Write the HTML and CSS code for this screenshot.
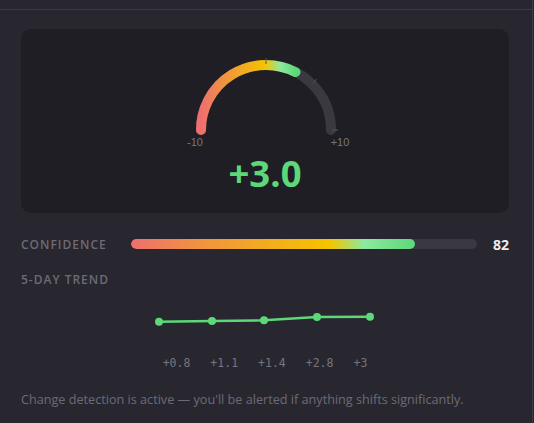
FILE: index.html
```html
<!DOCTYPE html>
<html lang="en">

<head>
  <meta charset="UTF-8" />
  <meta name="viewport" content="width=device-width, initial-scale=1.0" />
  <title>Sentiment Gauge</title>
  <link rel="stylesheet" href="styles.css">
</head>

<body>
  <div class="page">
    <div class="topbar"></div>

    <div class="content">
      <div class="gauge-card">
        <svg class="gauge" width="180" height="92" viewBox="-1 0 180 92">
          <defs>
            <linearGradient id="heat" x1="0" y1="0" x2="1" y2="0">
              <stop offset="0" stop-color="#ee6f6f" />
              <stop offset="0.25" stop-color="#f0943f" />
              <stop offset="0.68" stop-color="#f5c400" />
              <stop offset="0.84" stop-color="#8ee9a0" />
              <stop offset="1" stop-color="#5dd879" />
            </linearGradient>
          </defs>
          <!-- track -->
          <path d="M25 75 A65 65 0 0 1 90 10 A65 65 0 0 1 155 75" fill="none" stroke="#3a3941" stroke-width="10" stroke-linecap="round" />
          <!-- value arc: +3.0 of -10..+10 -->
          <path d="M25 75 A65 65 0 0 1 119.5 17.1" fill="none" stroke="url(#heat)" stroke-width="10" stroke-linecap="round" />
          <g class="ticks" stroke="#55545c" stroke-width="1">
            <line x1="90" y1="9" x2="90" y2="3" />
            <line x1="136.7" y1="28.3" x2="140.9" y2="24.1" />
            <line x1="156" y1="75" x2="162" y2="75" />
          </g>
          <text class="gauge-min" x="19" y="91" text-anchor="middle">-10</text>
          <text class="gauge-max" x="164" y="91" text-anchor="middle">+10</text>
        </svg>
        <div class="gauge-value">+3.0</div>
      </div>

      <div class="metric-row">
        <div class="label">Confidence</div>
        <div class="bar">
          <div class="bar-fill" style="width: 82%"></div>
        </div>
        <div class="metric-value">82</div>
      </div>

      <div class="label trend-label">5-Day Trend</div>

      <div class="trend">
        <svg class="trend-chart" width="222" height="18" viewBox="0 0 222 18">
          <polyline points="5,11.7 58,11 110,10.3 163,7 216,6.7" fill="none" stroke="#5dd879" stroke-width="2.5" stroke-linejoin="round" />
          <g fill="#5dd879">
            <circle cx="5" cy="11.7" r="4" />
            <circle cx="58" cy="11" r="4" />
            <circle cx="110" cy="10.3" r="4" />
            <circle cx="163" cy="7" r="4" />
            <circle cx="216" cy="6.7" r="4" />
          </g>
        </svg>
        <div class="trend-values">
          <span>+0.8</span>
          <span>+1.1</span>
          <span>+1.4</span>
          <span>+2.8</span>
          <span>+3</span>
        </div>
      </div>

      <p class="note">Change detection is active — you'll be alerted if anything shifts significantly.</p>
    </div>
  </div>
</body>

</html>
```

FILE: styles.css
```css
* {
  box-sizing: border-box;
}

body {
  margin: 0;
  background-color: #28272f;
  font-family: "Open Sans", "Noto Sans", sans-serif;
  color: #e6e6ea;
}

.page {
  width: 533px;
  min-height: 100vh;
  border-right: 1px solid #3b3a46;
}

.topbar {
  height: 10px;
  border-bottom: 1px solid #3b3a46;
}

.content {
  padding: 19px 23px 0 21px;
}

.gauge-card {
  background-color: #1f1e24;
  border-radius: 10px;
  height: 184px;
  padding-top: 26px;
  display: flex;
  flex-direction: column;
  align-items: center;
}

.gauge text {
  font-family: "Liberation Sans", Arial, sans-serif;
  font-size: 11px;
  fill: #76757f;
}

.gauge-value {
  font-size: 36.5px;
  font-weight: 700;
  line-height: 40px;
  color: #5dd879;
  margin-top: 6px;
}

.metric-row {
  display: grid;
  grid-template-columns: 110px 1fr 32px;
  align-items: center;
  height: 20px;
  margin-top: 21px;
}

.label {
  font-size: 12px;
  font-weight: 600;
  letter-spacing: 1px;
  text-transform: uppercase;
  color: #6c6b76;
}

.bar {
  height: 10px;
  border-radius: 5px;
  background-color: #393843;
  overflow: hidden;
}

.bar-fill {
  height: 100%;
  border-radius: 5px;
  background: linear-gradient(90deg, #ee6f6f 0%, #f0943f 25%, #f5c400 70%, #8ee9a0 82%, #5dd879 100%);
}

.metric-value {
  text-align: right;
  font-size: 14px;
  font-weight: 700;
  color: #ececf0;
}

.trend-label {
  margin-top: 17px;
}

.trend {
  display: flex;
  flex-direction: column;
  align-items: center;
  margin-top: 22px;
}

.trend-values {
  display: flex;
  gap: 20px;
  margin-top: 28px;
  font-family: "DejaVu Sans Mono", monospace;
  font-size: 11.5px;
  color: #76757f;
}

.note {
  margin: 20px 0 0;
  font-size: 12.65px;
  color: #6c6b76;
}
```
